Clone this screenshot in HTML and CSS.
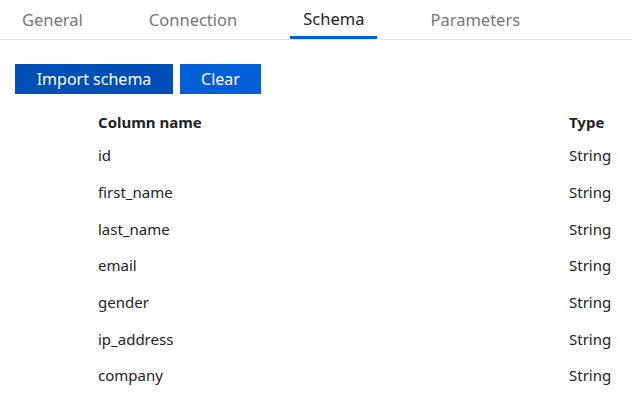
FILE: index.html
```html
<!DOCTYPE html>
<html>
<head>
<meta charset="utf-8">
<link rel="stylesheet" href="styles.css">
</head>
<body>
<nav class="tabs">
  <div class="tab">General</div>
  <div class="tab">Connection</div>
  <div class="tab active">Schema</div>
  <div class="tab">Parameters</div>
</nav>
<div class="actions">
  <button class="btn btn-primary">Import schema</button>
  <button class="btn btn-secondary">Clear</button>
</div>
<div class="schema">
  <div class="row head"><span>Column name</span><span>Type</span></div>
  <div class="row"><span>id</span><span>String</span></div>
  <div class="row"><span>first_name</span><span>String</span></div>
  <div class="row"><span>last_name</span><span>String</span></div>
  <div class="row"><span>email</span><span>String</span></div>
  <div class="row"><span>gender</span><span>String</span></div>
  <div class="row"><span>ip_address</span><span>String</span></div>
  <div class="row"><span>company</span><span>String</span></div>
</div>
</body>
</html>
```
FILE: styles.css
```css
html, body {
  margin: 0;
  padding: 0;
  background: #ffffff;
  font-family: "Noto Sans", "Open Sans", sans-serif;
  color: #222222;
}
.tabs {
  display: flex;
  gap: 40px;
  height: 39px;
  padding-left: 9px;
  border-bottom: 1px solid #e3e3e3;
}
.tab {
  box-sizing: border-box;
  height: 39px;
  padding: 1px 13px 0;
  font-size: 16.5px;
  line-height: 38px;
  color: #767676;
  border-bottom: 3px solid transparent;
}
.tab.active {
  color: #222222;
  line-height: 35px;
  border-bottom-color: #005fd7;
}
.actions {
  display: flex;
  gap: 7px;
  padding: 24px 0 0 15px;
}
.btn {
  height: 30px;
  border: none;
  padding: 0;
  color: #ffffff;
  font-family: inherit;
  font-size: 16px;
  cursor: pointer;
}
.btn-primary {
  width: 158px;
  background: #004fb6;
}
.btn-secondary {
  width: 81px;
  background: #005fd7;
}
.schema {
  padding-top: 12px;
}
.row {
  display: grid;
  grid-template-columns: 1fr 63px;
  padding-left: 98px;
  height: 36.67px;
  align-items: center;
  font-size: 15px;
}
.row.head {
  height: 31px;
  font-weight: 700;
}
```
